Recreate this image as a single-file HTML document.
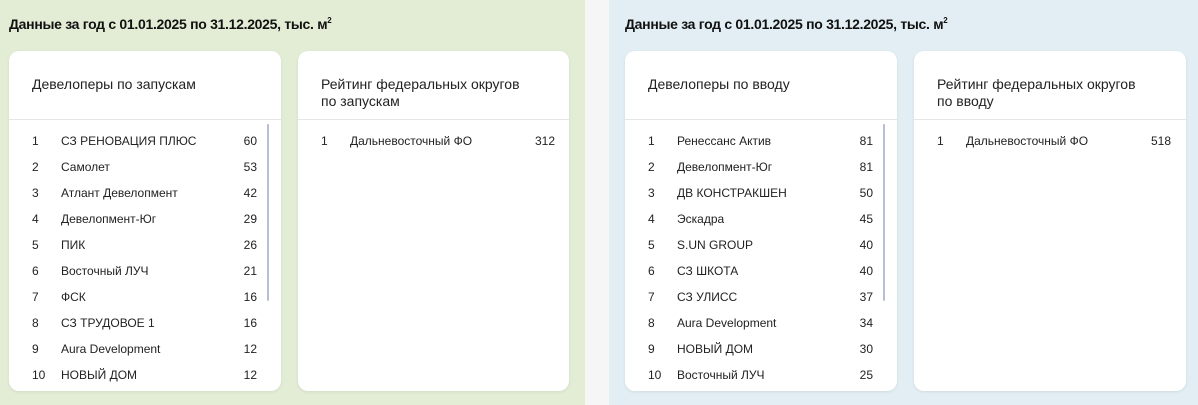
<!DOCTYPE html>
<html><head><meta charset="utf-8"><style>
*{margin:0;padding:0;box-sizing:border-box}
body{width:1198px;height:405px;overflow:hidden;font-family:"Liberation Sans",sans-serif;color:#1a1a1a;background:#f5f6f5;position:relative}
.panel{position:absolute;top:0;height:405px}
.p1{left:0;width:585px;background:#e3edd5}
.p2{left:609px;width:589px;background:#e2eef3}
h1{position:absolute;top:16px;font-size:14px;font-weight:bold;letter-spacing:-0.3px;color:#111}
h1 sup{font-size:8px;vertical-align:6px}
.card{position:absolute;top:51px;width:272px;height:340px;background:#fff;border-radius:10px;box-shadow:0 1px 3px rgba(0,0,0,.08);overflow:hidden}
.title{position:absolute;left:23px;top:25px;font-size:14px;line-height:17px;color:#222;width:215px}
.div{position:absolute;left:0;right:0;top:68px;height:1px;background:#e6e6e6}
.row{position:absolute;left:23px;width:225px;font-size:12px;height:16px;line-height:16px;color:#222}
.row .n{position:absolute;left:0}
.row .t{position:absolute;left:29px}
.row .v{position:absolute;right:0}
.sb{position:absolute;left:258px;top:73px;width:2px;height:177px;background:#b8bdd6;border-radius:1px}
</style></head><body>
<div class="panel p1"><h1 style="left:9px">Данные за год с 01.01.2025 по 31.12.2025, тыс. м<sup>2</sup></h1></div>
<div class="panel p2"><h1 style="left:16px">Данные за год с 01.01.2025 по 31.12.2025, тыс. м<sup>2</sup></h1></div>

<div class="card" style="left:9px">
<div class="title">Девелоперы по запускам</div><div class="div"></div><div class="sb"></div>
<div class="row" style="top:82px"><span class="n">1</span><span class="t">СЗ РЕНОВАЦИЯ ПЛЮС</span><span class="v">60</span></div>
<div class="row" style="top:108px"><span class="n">2</span><span class="t">Самолет</span><span class="v">53</span></div>
<div class="row" style="top:134px"><span class="n">3</span><span class="t">Атлант Девелопмент</span><span class="v">42</span></div>
<div class="row" style="top:160px"><span class="n">4</span><span class="t">Девелопмент-Юг</span><span class="v">29</span></div>
<div class="row" style="top:186px"><span class="n">5</span><span class="t">ПИК</span><span class="v">26</span></div>
<div class="row" style="top:212px"><span class="n">6</span><span class="t">Восточный ЛУЧ</span><span class="v">21</span></div>
<div class="row" style="top:238px"><span class="n">7</span><span class="t">ФСК</span><span class="v">16</span></div>
<div class="row" style="top:264px"><span class="n">8</span><span class="t">СЗ ТРУДОВОЕ 1</span><span class="v">16</span></div>
<div class="row" style="top:290px"><span class="n">9</span><span class="t">Aura Development</span><span class="v">12</span></div>
<div class="row" style="top:316px"><span class="n">10</span><span class="t">НОВЫЙ ДОМ</span><span class="v">12</span></div>
</div>

<div class="card" style="left:298px;width:271px">
<div class="title">Рейтинг федеральных округов<br>по запускам</div><div class="div"></div>
<div class="row" style="top:82px;width:234px"><span class="n">1</span><span class="t">Дальневосточный ФО</span><span class="v">312</span></div>
</div>

<div class="card" style="left:625px">
<div class="title">Девелоперы по вводу</div><div class="div"></div><div class="sb"></div>
<div class="row" style="top:82px"><span class="n">1</span><span class="t">Ренессанс Актив</span><span class="v">81</span></div>
<div class="row" style="top:108px"><span class="n">2</span><span class="t">Девелопмент-Юг</span><span class="v">81</span></div>
<div class="row" style="top:134px"><span class="n">3</span><span class="t">ДВ КОНСТРАКШЕН</span><span class="v">50</span></div>
<div class="row" style="top:160px"><span class="n">4</span><span class="t">Эскадра</span><span class="v">45</span></div>
<div class="row" style="top:186px"><span class="n">5</span><span class="t">S.UN GROUP</span><span class="v">40</span></div>
<div class="row" style="top:212px"><span class="n">6</span><span class="t">СЗ ШКОТА</span><span class="v">40</span></div>
<div class="row" style="top:238px"><span class="n">7</span><span class="t">СЗ УЛИСС</span><span class="v">37</span></div>
<div class="row" style="top:264px"><span class="n">8</span><span class="t">Aura Development</span><span class="v">34</span></div>
<div class="row" style="top:290px"><span class="n">9</span><span class="t">НОВЫЙ ДОМ</span><span class="v">30</span></div>
<div class="row" style="top:316px"><span class="n">10</span><span class="t">Восточный ЛУЧ</span><span class="v">25</span></div>
</div>

<div class="card" style="left:914px">
<div class="title">Рейтинг федеральных округов<br>по вводу</div><div class="div"></div>
<div class="row" style="top:82px;width:234px"><span class="n">1</span><span class="t">Дальневосточный ФО</span><span class="v">518</span></div>
</div>
</body></html>
